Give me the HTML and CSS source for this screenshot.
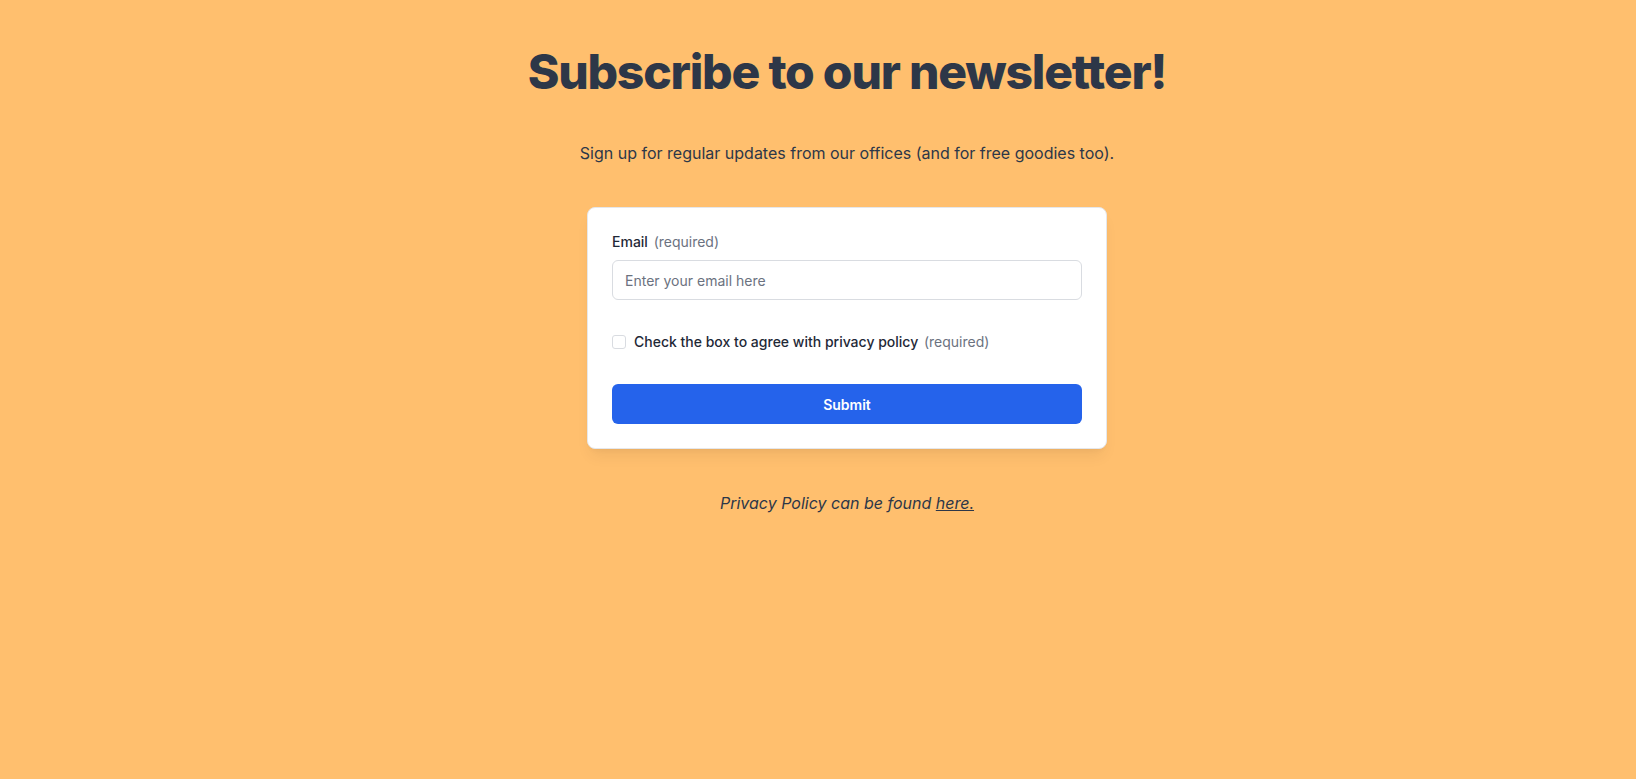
FILE: index.html
```html
<!DOCTYPE html>
<html lang="en">
<head>
    <meta charset="UTF-8">
    <meta name="viewport" content="width=device-width, initial-scale=1.0">
    <title>Newsletter</title>
    <link rel="stylesheet" href="styles.css">
</head>
<body>
    <main class="page">
        <h1 class="title">Subscribe to our newsletter!</h1>
        <p class="lead">Sign up for regular updates from our offices (and for free goodies too).</p>

        <form class="card" id="newsletterForm">
            <div class="field">
                <label for="email" class="label">Email <span class="hint">(required)</span></label>
                <input type="email" id="email" name="email" placeholder="Enter your email here" required>
            </div>

            <label class="check">
                <input type="checkbox" name="privacy" required>
                <span class="label">Check the box to agree with privacy policy <span class="hint">(required)</span></span>
            </label>

            <button type="submit">Submit</button>
        </form>

        <p class="note">Privacy Policy can be found <a href="#">here.</a></p>
    </main>
</body>
</html>
```

FILE: styles.css
```css
body {
    margin: 0;
    background-color: #ffbf6e;
    font-family: Inter, "Noto Sans", sans-serif;
    color: #1f2937;
}

.page {
    display: flex;
    flex-direction: column;
    align-items: center;
    padding: 48px 0 0 58px;
}

.title {
    margin: 0 0 45px;
    font-size: 48px;
    line-height: 48px;
    font-weight: 800;
    letter-spacing: -0.025em;
    color: #2d3748;
}

.lead {
    margin: 0 0 42px;
    font-size: 16px;
    line-height: 24px;
    color: #2d3748;
}

.card {
    box-sizing: border-box;
    width: 520px;
    padding: 24px;
    background-color: white;
    border: 1px solid #e5e7eb;
    border-radius: 8px;
    box-shadow: 0 10px 15px -3px rgba(0, 0, 0, 0.06), 0 4px 6px -4px rgba(0, 0, 0, 0.06);
    display: flex;
    flex-direction: column;
}

.field {
    display: flex;
    flex-direction: column;
    gap: 8px;
    margin-bottom: 32px;
}

.label {
    font-size: 14px;
    line-height: 20px;
    font-weight: 500;
    color: #1f2937;
}

.hint {
    font-weight: 400;
    color: #6b7280;
    margin-left: 2px;
}

input[type="email"] {
    box-sizing: border-box;
    height: 40px;
    padding: 0 12px;
    border: 1px solid #d9dce1;
    border-radius: 6px;
    font-family: inherit;
    font-size: 14px;
    color: #1f2937;
}

input::placeholder {
    color: #6b7280;
}

.check {
    display: flex;
    align-items: center;
    gap: 8px;
    margin-bottom: 32px;
}

.check input {
    appearance: none;
    width: 14px;
    height: 14px;
    margin: 0;
    border: 1px solid #d9dce1;
    border-radius: 3px;
    background: white;
}

button {
    height: 40px;
    border: none;
    border-radius: 6px;
    background-color: #2563eb;
    color: white;
    font-family: inherit;
    font-size: 14px;
    font-weight: 600;
    cursor: pointer;
}

.note {
    margin: 42px 0 0;
    font-size: 16px;
    line-height: 24px;
    font-style: italic;
    color: #2d3748;
}

.note a {
    color: inherit;
}
```
